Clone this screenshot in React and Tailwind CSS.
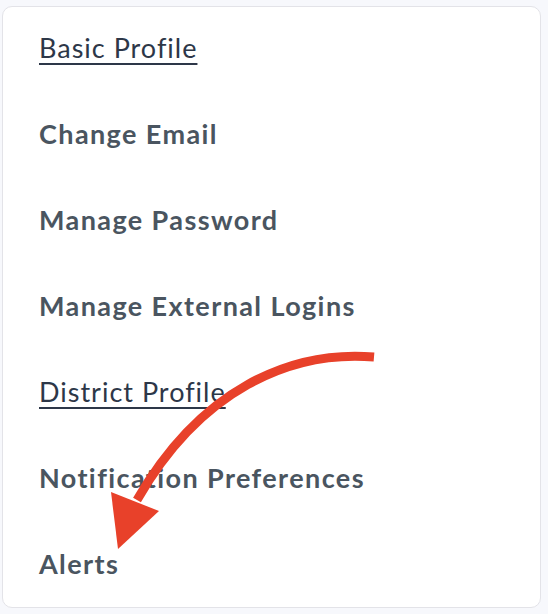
import React from "react";

const items = [
  { label: "Basic Profile", link: true },
  { label: "Change Email" },
  { label: "Manage Password" },
  { label: "Manage External Logins" },
  { label: "District Profile", link: true },
  { label: "Notification Preferences" },
  { label: "Alerts" },
];

export default function App() {
  return (
    <div className="relative w-[548px] h-[614px] bg-[#f7f8fc] pt-[6px] pl-[2px] font-['Lato','Liberation_Sans',sans-serif]">
      <div className="w-[539px] h-[602px] bg-white border border-[#e3e3e8] rounded-[10px] flex flex-col pl-[36px]">
        {items.map((it) => (
          <div key={it.label} className="h-[86px] pb-[3px] flex items-center shrink-0">
            {it.link ? (
              <a href="#" className="text-[27px] tracking-[1px] text-[#2d3748] underline underline-offset-[5px] decoration-[2px]">
                {it.label}
              </a>
            ) : (
              <span className="text-[27px] tracking-[1.4px] font-bold text-[#4a5560]">{it.label}</span>
            )}
          </div>
        ))}
      </div>
      <svg className="absolute left-0 top-0 pointer-events-none" width="548" height="614" viewBox="0 0 548 614">
        <path d="M374 357 C 290 350, 200 390, 137 500" fill="none" stroke="#e8412a" strokeWidth="9" />
        <polygon points="111,492 159,511 118,549" fill="#e8412a" />
      </svg>
    </div>
  );
}
